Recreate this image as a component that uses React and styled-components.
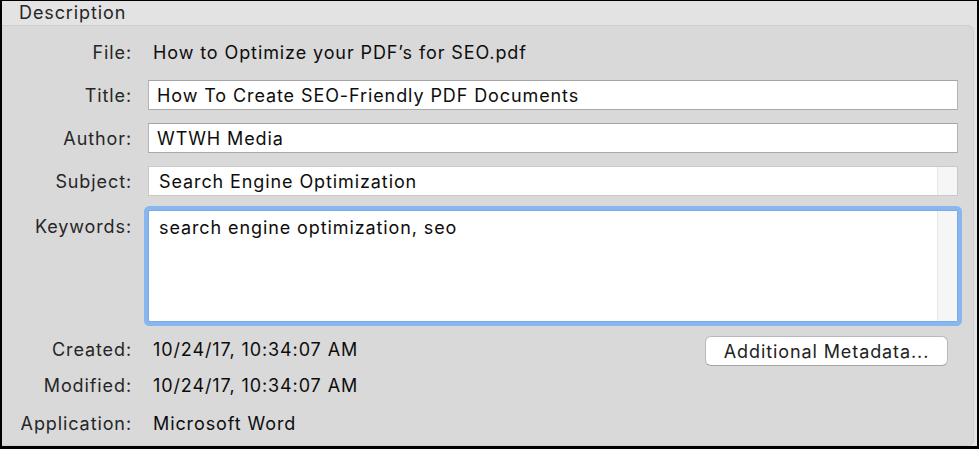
import styled, { createGlobalStyle } from 'styled-components'

const GlobalStyle = createGlobalStyle`
  html, body {
    margin: 0;
    padding: 0;
    background: #e3e3e3;
  }
  body {
    font-family: Inter, "Liberation Sans", sans-serif;
    font-size: 18px;
    letter-spacing: 0.9px;
  }
`

const fields = [
  { label: 'Title:', value: 'How To Create SEO-Friendly PDF Documents' },
  { label: 'Author:', value: 'WTWH Media' },
]

export default function App() {
  return (
    <>
      <GlobalStyle />
      <Frame>
        <Header>Description</Header>
        <Panel>
          <Row>
            <Label>File:</Label>
            <Value>How to Optimize your PDF’s for SEO.pdf</Value>
          </Row>
          {fields.map((f) => (
            <Row key={f.label} $mt={13}>
              <Label>{f.label}</Label>
              <TextField>{f.value}</TextField>
            </Row>
          ))}
          <Row $mt={13}>
            <Label>Subject:</Label>
            <TextView>
              <ViewText>Search Engine Optimization</ViewText>
              <Scroller />
            </TextView>
          </Row>
          <Row $mt={14} $tall>
            <Label $top>Keywords:</Label>
            <TextView $focused>
              <ViewText $top>search engine optimization, seo</ViewText>
              <Scroller />
            </TextView>
          </Row>
          <Row $mt={10}>
            <Label>Created:</Label>
            <Split>
              <Value>10/24/17, 10:34:07 AM</Value>
              <Button>Additional Metadata...</Button>
            </Split>
          </Row>
          <Row $mt={8}>
            <Label>Modified:</Label>
            <Value>10/24/17, 10:34:07 AM</Value>
          </Row>
          <Row $mt={8}>
            <Label>Application:</Label>
            <Value>Microsoft Word</Value>
          </Row>
        </Panel>
      </Frame>
    </>
  )
}

const Frame = styled.div`
  box-sizing: border-box;
  width: 979px;
  height: 449px;
  border-style: solid;
  border-color: #000;
  border-width: 1px 2px 3px 2px;
  background: #e3e3e3;
  display: flex;
  flex-direction: column;
  padding-right: 3px;
`

const Header = styled.div`
  height: 24px;
  padding-left: 17px;
  line-height: 24px;
  color: #262626;
`

const Panel = styled.div`
  flex: 1;
  box-sizing: border-box;
  background: #d9d9d9;
  border: 1px solid #cdcdcd;
  border-left: none;
  border-radius: 0 7px 7px 0;
  padding: 11px 15px 0 0;
  display: flex;
  flex-direction: column;
`

const Row = styled.div`
  display: grid;
  grid-template-columns: 129px 1fr;
  column-gap: 17px;
  align-items: ${(p) => (p.$tall ? 'stretch' : 'center')};
  height: ${(p) => (p.$tall ? '112px' : '30px')};
  margin-top: ${(p) => p.$mt || 0}px;
`

const Label = styled.div`
  text-align: right;
  margin-right: -1px;
  color: #262626;
  align-self: ${(p) => (p.$top ? 'start' : 'center')};
  padding-top: ${(p) => (p.$top ? '6px' : '0')};
`

const Value = styled.div`
  padding-left: 5px;
  color: #0d0d0d;
`

const TextField = styled.div`
  box-sizing: border-box;
  height: 30px;
  background: #fff;
  border: 1px solid #b4b4b4;
  border-top-color: #a6a6a6;
  border-bottom-color: #a9a9a9;
  padding: 0 8px;
  display: flex;
  align-items: center;
  color: #0d0d0d;
`

const TextView = styled.div`
  box-sizing: border-box;
  height: 100%;
  display: flex;
  background: #fff;
  border: 1px solid ${(p) => (p.$focused ? '#7aa9e6' : '#c9c9c9')};
  border-radius: ${(p) => (p.$focused ? '2px' : '0')};
  box-shadow: ${(p) => (p.$focused ? '0 0 0 4px #88b6ee' : 'none')};
`

const ViewText = styled.div`
  flex: 1;
  padding: ${(p) => (p.$top ? '6px 10px 0' : '0 10px')};
  display: flex;
  align-items: ${(p) => (p.$top ? 'flex-start' : 'center')};
  color: #0d0d0d;
`

const Scroller = styled.div`
  width: 19px;
  background: #f6f6f6;
  border-left: 1px solid #e6e6e6;
`

const Split = styled.div`
  display: flex;
  align-items: center;
  justify-content: space-between;
  padding-right: 10px;
`

const Button = styled.button`
  box-sizing: border-box;
  width: 243px;
  height: 30px;
  margin-top: 4px;
  background: #fff;
  border: 1px solid #b9b9b9;
  border-bottom-color: #a4a4a4;
  border-radius: 6px;
  font: inherit;
  letter-spacing: inherit;
  color: #222;
  padding: 0;
`
